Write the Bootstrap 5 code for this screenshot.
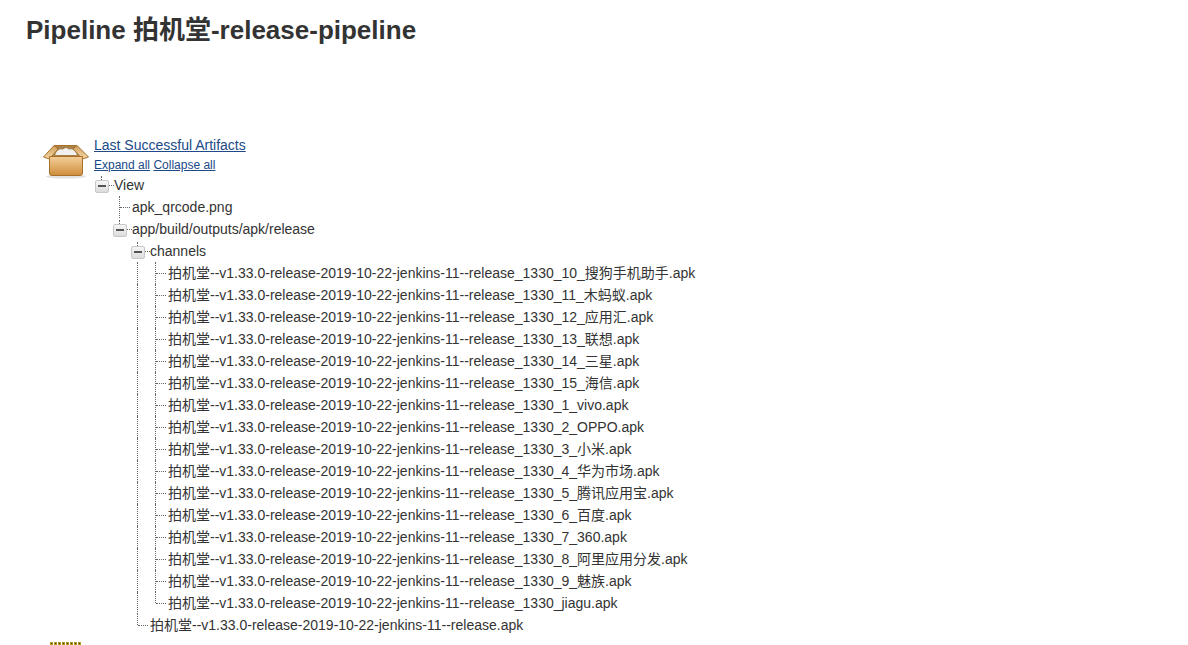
<!DOCTYPE html>
<html lang="zh">
<head>
  <meta charset="UTF-8">
  <meta name="viewport" content="width=device-width, initial-scale=1.0">
  <title>Pipeline 拍机堂-release-pipeline</title>
  <link href="https://cdn.jsdelivr.net/npm/bootstrap@5.3.0/dist/css/bootstrap.min.css" rel="stylesheet">
  <style>
    body { font-family: "Liberation Sans", "Noto Sans CJK SC", sans-serif; font-size: 14px; color: #333; background: #fff; }
    a { color: #204a87; }
    .page-title { font-size: 26px; font-weight: 700; line-height: 30px; margin: 15px 0 0 26px; color: #333; }
    .artifacts { margin: 91px 0 0 42px; }
    .box-icon { width: 48px; height: 48px; margin-right: 4px; flex: none; }
    .artifacts-head { line-height: 18px; height: 18px; margin-bottom: 3px; }
    .tree-links { font-size: 12px; line-height: 16px; height: 17px; }
    .tree-row { height: 22px; line-height: 22px; white-space: nowrap; }
    .cell { width: 18px; height: 22px; flex: none; position: relative; }
    .file-name { padding-left: 2px; }
    /* dotted tree lines */
    .vline::before, .tee::before, .ell::before { content: ""; position: absolute; left: 7px; top: 0; bottom: 0; border-left: 1px dotted #666; }
    .ell::before { bottom: 11px; }
    .tee::after, .ell::after { content: ""; position: absolute; left: 8px; right: 0; top: 11px; border-top: 1px dotted #666; }
    .toggle::before { content: ""; position: absolute; left: 7px; top: 2px; height: 4px; border-left: 1px dotted #666; }
    .toggle::after { content: ""; position: absolute; left: 15px; right: -2px; top: 11px; border-top: 1px dotted #666; }
    .minus { position: absolute; left: 1px; top: 6px; width: 14px; height: 13px; border: 1px solid #c8c8c8; border-radius: 2px; background: linear-gradient(#f6f6f6, #dcdcdc); z-index: 1; }
    .minus::after { content: ""; position: absolute; left: 2px; right: 2px; top: 4px; height: 2px; background: #555; }
    .next-icon { width: 32px; height: 3px; margin: 6px 0 0 50px; background: radial-gradient(circle at 1.5px 1.5px, #3f3500 0 1px, #b89a20 1px 2px, transparent 2px) 0 0 / 4px 3px repeat-x; }
  </style>
</head>
<body>

  <h1 class="page-title">Pipeline 拍机堂-release-pipeline</h1>

  <div class="artifacts d-flex">
    <!-- package icon -->
    <svg class="box-icon" viewBox="0 0 48 48" aria-hidden="true">
      <defs>
        <linearGradient id="boxFront" x1="0" y1="0" x2="0" y2="1">
          <stop offset="0" stop-color="#f2cf98"/>
          <stop offset="1" stop-color="#cf8d3c"/>
        </linearGradient>
        <linearGradient id="flap" x1="0" y1="0" x2="0" y2="1">
          <stop offset="0" stop-color="#d2a05c"/>
          <stop offset="1" stop-color="#f4d9aa"/>
        </linearGradient>
      </defs>
      <ellipse cx="24" cy="40.5" rx="20" ry="2" fill="#e2e2e2"/>
      <path d="M12 9.5 H35 L41 21 H7 Z" fill="#a8814a"/>
      <path d="M14 17 Q16 12.5 21 13.5 Q24 10.5 27 13.5 Q32 12.5 34 17 L35 19 H13 Z" fill="#f0f0f0"/>
      <path d="M12 9.5 L1.5 21 L7.5 23 L16 13 Z" fill="url(#flap)" stroke="#a8702a" stroke-linejoin="round"/>
      <path d="M35 9.5 L46.5 21 L40.5 23 L31 13 Z" fill="url(#flap)" stroke="#a8702a" stroke-linejoin="round"/>
      <path d="M12 9.5 H35" fill="none" stroke="#a8702a"/>
      <path d="M7.5 20.5 H40.5 V37 Q40.5 39.5 38 39.5 H10 Q7.5 39.5 7.5 37 Z" fill="url(#boxFront)" stroke="#a8702a"/>
    </svg>
    <div>
      <div class="artifacts-head"><a href="#">Last Successful Artifacts</a></div>
      <div class="tree-links"><a href="#">Expand all</a> <a href="#">Collapse all</a></div>

      <div class="tree-row d-flex"><span class="cell toggle"><i class="minus"></i></span><span class="file-name">View</span></div>
      <div class="tree-row d-flex"><span class="cell"></span><span class="cell tee"></span><span class="file-name">apk_qrcode.png</span></div>
      <div class="tree-row d-flex"><span class="cell"></span><span class="cell toggle"><i class="minus"></i></span><span class="file-name">app/build/outputs/apk/release</span></div>
      <div class="tree-row d-flex"><span class="cell"></span><span class="cell"></span><span class="cell toggle"><i class="minus"></i></span><span class="file-name">channels</span></div>
      <div class="tree-row d-flex"><span class="cell"></span><span class="cell"></span><span class="cell vline"></span><span class="cell tee"></span><span class="file-name">拍机堂--v1.33.0-release-2019-10-22-jenkins-11--release_1330_10_搜狗手机助手.apk</span></div>
      <div class="tree-row d-flex"><span class="cell"></span><span class="cell"></span><span class="cell vline"></span><span class="cell tee"></span><span class="file-name">拍机堂--v1.33.0-release-2019-10-22-jenkins-11--release_1330_11_木蚂蚁.apk</span></div>
      <div class="tree-row d-flex"><span class="cell"></span><span class="cell"></span><span class="cell vline"></span><span class="cell tee"></span><span class="file-name">拍机堂--v1.33.0-release-2019-10-22-jenkins-11--release_1330_12_应用汇.apk</span></div>
      <div class="tree-row d-flex"><span class="cell"></span><span class="cell"></span><span class="cell vline"></span><span class="cell tee"></span><span class="file-name">拍机堂--v1.33.0-release-2019-10-22-jenkins-11--release_1330_13_联想.apk</span></div>
      <div class="tree-row d-flex"><span class="cell"></span><span class="cell"></span><span class="cell vline"></span><span class="cell tee"></span><span class="file-name">拍机堂--v1.33.0-release-2019-10-22-jenkins-11--release_1330_14_三星.apk</span></div>
      <div class="tree-row d-flex"><span class="cell"></span><span class="cell"></span><span class="cell vline"></span><span class="cell tee"></span><span class="file-name">拍机堂--v1.33.0-release-2019-10-22-jenkins-11--release_1330_15_海信.apk</span></div>
      <div class="tree-row d-flex"><span class="cell"></span><span class="cell"></span><span class="cell vline"></span><span class="cell tee"></span><span class="file-name">拍机堂--v1.33.0-release-2019-10-22-jenkins-11--release_1330_1_vivo.apk</span></div>
      <div class="tree-row d-flex"><span class="cell"></span><span class="cell"></span><span class="cell vline"></span><span class="cell tee"></span><span class="file-name">拍机堂--v1.33.0-release-2019-10-22-jenkins-11--release_1330_2_OPPO.apk</span></div>
      <div class="tree-row d-flex"><span class="cell"></span><span class="cell"></span><span class="cell vline"></span><span class="cell tee"></span><span class="file-name">拍机堂--v1.33.0-release-2019-10-22-jenkins-11--release_1330_3_小米.apk</span></div>
      <div class="tree-row d-flex"><span class="cell"></span><span class="cell"></span><span class="cell vline"></span><span class="cell tee"></span><span class="file-name">拍机堂--v1.33.0-release-2019-10-22-jenkins-11--release_1330_4_华为市场.apk</span></div>
      <div class="tree-row d-flex"><span class="cell"></span><span class="cell"></span><span class="cell vline"></span><span class="cell tee"></span><span class="file-name">拍机堂--v1.33.0-release-2019-10-22-jenkins-11--release_1330_5_腾讯应用宝.apk</span></div>
      <div class="tree-row d-flex"><span class="cell"></span><span class="cell"></span><span class="cell vline"></span><span class="cell tee"></span><span class="file-name">拍机堂--v1.33.0-release-2019-10-22-jenkins-11--release_1330_6_百度.apk</span></div>
      <div class="tree-row d-flex"><span class="cell"></span><span class="cell"></span><span class="cell vline"></span><span class="cell tee"></span><span class="file-name">拍机堂--v1.33.0-release-2019-10-22-jenkins-11--release_1330_7_360.apk</span></div>
      <div class="tree-row d-flex"><span class="cell"></span><span class="cell"></span><span class="cell vline"></span><span class="cell tee"></span><span class="file-name">拍机堂--v1.33.0-release-2019-10-22-jenkins-11--release_1330_8_阿里应用分发.apk</span></div>
      <div class="tree-row d-flex"><span class="cell"></span><span class="cell"></span><span class="cell vline"></span><span class="cell tee"></span><span class="file-name">拍机堂--v1.33.0-release-2019-10-22-jenkins-11--release_1330_9_魅族.apk</span></div>
      <div class="tree-row d-flex"><span class="cell"></span><span class="cell"></span><span class="cell vline"></span><span class="cell ell"></span><span class="file-name">拍机堂--v1.33.0-release-2019-10-22-jenkins-11--release_1330_jiagu.apk</span></div>
      <div class="tree-row d-flex"><span class="cell"></span><span class="cell"></span><span class="cell ell"></span><span class="file-name">拍机堂--v1.33.0-release-2019-10-22-jenkins-11--release.apk</span></div>
    </div>
  </div>

  <div class="next-icon"></div>

</body>
</html>
